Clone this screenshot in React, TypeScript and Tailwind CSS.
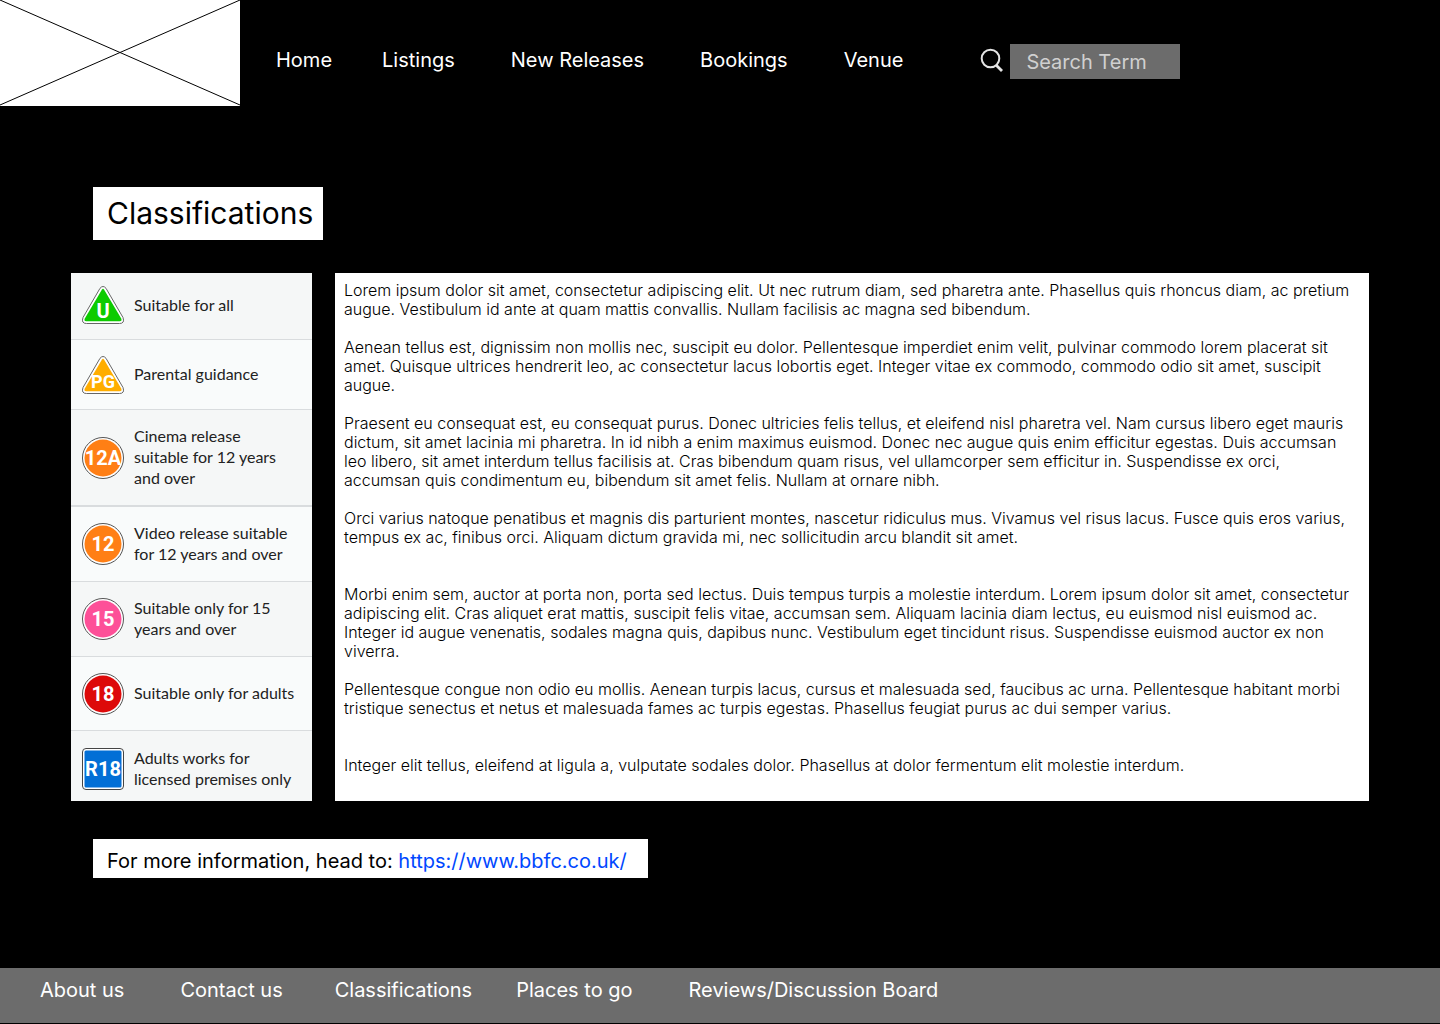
import React from "react";

type Shape = "triangle" | "circle" | "square";

interface Rating {
  code: string;
  label: string;
  shape: Shape;
  color: string;
  row: string;
}

const ratings: Rating[] = [
  { code: "U", label: "Suitable for all", shape: "triangle", color: "#0dcb00", row: "min-h-[67px] pb-0.5 border-b bg-[#f5f7f7]" },
  { code: "PG", label: "Parental guidance", shape: "triangle", color: "#ffad00", row: "min-h-[70px] border-b bg-[#f9fbfb]" },
  { code: "12A", label: "Cinema release suitable for 12 years and over", shape: "circle", color: "#ff7f15", row: "min-h-[97px] border-b-2 bg-[#f5f7f7]" },
  { code: "12", label: "Video release suitable for 12 years and over", shape: "circle", color: "#ff7f15", row: "min-h-[75px] border-b bg-[#f9fbfb]" },
  { code: "15", label: "Suitable only for 15 years and over", shape: "circle", color: "#fd5098", row: "min-h-[75px] border-b bg-[#f5f7f7]" },
  { code: "18", label: "Suitable only for adults", shape: "circle", color: "#dd0a0a", row: "min-h-[74px] border-b bg-[#f9fbfb]" },
  { code: "R18", label: "Adults works for licensed premises only", shape: "square", color: "#026fd6", row: "min-h-[70px] pt-1.5 bg-[#f5f7f7]" },
];

const paragraphs = [
  { text: "Lorem ipsum dolor sit amet, consectetur adipiscing elit. Ut nec rutrum diam, sed pharetra ante. Phasellus quis rhoncus diam, ac pretium augue. Vestibulum id ante at quam mattis convallis. Nullam facilisis ac magna sed bibendum.", gap: "mb-[19px]" },
  { text: "Aenean tellus est, dignissim non mollis nec, suscipit eu dolor. Pellentesque imperdiet enim velit, pulvinar commodo lorem placerat sit amet. Quisque ultrices hendrerit leo, ac consectetur lacus lobortis eget. Integer vitae ex commodo, commodo odio sit amet, suscipit augue.", gap: "mb-[19px]" },
  { text: "Praesent eu consequat est, eu consequat purus. Donec ultricies felis tellus, et eleifend nisl pharetra vel. Nam cursus libero eget mauris dictum, sit amet lacinia mi pharetra. In id nibh a enim maximus euismod. Donec nec augue quis enim efficitur egestas. Duis accumsan leo libero, sit amet interdum tellus facilisis at. Cras bibendum quam risus, vel ullamcorper sem efficitur in. Suspendisse ex orci, accumsan quis condimentum eu, bibendum sit amet felis. Nullam at ornare nibh.", gap: "mb-[19px]" },
  { text: "Orci varius natoque penatibus et magnis dis parturient montes, nascetur ridiculus mus. Vivamus vel risus lacus. Fusce quis eros varius, tempus ex ac, finibus orci. Aliquam dictum gravida mi, nec sollicitudin arcu blandit sit amet.", gap: "mb-[38px]" },
  { text: "Morbi enim sem, auctor at porta non, porta sed lectus. Duis tempus turpis a molestie interdum. Lorem ipsum dolor sit amet, consectetur adipiscing elit. Cras aliquet erat mattis, suscipit felis vitae, accumsan sem. Aliquam lacinia diam lectus, eu euismod nisl euismod ac. Integer id augue venenatis, sodales magna quis, dapibus nunc. Vestibulum eget tincidunt risus. Suspendisse euismod auctor ex non viverra.", gap: "mb-[19px]" },
  { text: "Pellentesque congue non odio eu mollis. Aenean turpis lacus, cursus et malesuada sed, faucibus ac urna. Pellentesque habitant morbi tristique senectus et netus et malesuada fames ac turpis egestas. Phasellus feugiat purus ac dui semper varius.", gap: "mb-[38px]" },
  { text: "Integer elit tellus, eleifend at ligula a, vulputate sodales dolor. Phasellus at dolor fermentum elit molestie interdum.", gap: "" },
];

function Badge({ code, shape, color }: Pick<Rating, "code" | "shape" | "color">) {
  const height = shape === "triangle" ? 38 : 42;
  const fontSize = code === "PG" ? 18 : 20;
  const baseline = shape === "triangle" ? 32 : 28;
  return (
    <svg width="42" height={height} viewBox={`0 0 42 ${height}`} aria-hidden="true" className="shrink-0">
      {shape === "triangle" && (
        <>
          <path d="M18 2.3Q21-1.3 24 2.3L41 31.5Q43 37.5 37.5 37.5H4.5Q-1 37.5 1 31.5Z" fill="#fff" stroke="#666" strokeWidth="1" />
          <path d="M20 3.5Q21 2 22 3.5L39.5 33Q40 35.3 38 35.3H4Q2 35.3 2.5 33Z" fill={color} />
        </>
      )}
      {shape === "circle" && (
        <>
          <circle cx="21" cy="21" r="20.5" fill="#fff" stroke="#555" />
          <circle cx="21" cy="21" r="18.5" fill={color} />
        </>
      )}
      {shape === "square" && (
        <>
          <rect x=".5" y=".5" width="41" height="41" rx="3.5" fill="#fff" stroke="#444" />
          <rect x="2.5" y="2.5" width="37" height="37" rx="1.5" fill={color} />
        </>
      )}
      <text x="21" y={baseline} textAnchor="middle" fontSize={fontSize} fontWeight="700" fill="#fff" className="font-['Roboto',sans-serif]">
        {code}
      </text>
    </svg>
  );
}

export default function App() {
  return (
    <div className="flex min-h-screen flex-col bg-black font-['Inter',sans-serif]">
      <header className="flex items-start">
        <a href="#" aria-label="Logo" className="block shrink-0 bg-white">
          <svg width="240" height="106" viewBox="0 0 240 106" className="block" fill="none" stroke="#000">
            <path d="M0 0L240 105M0 105L240 0" />
          </svg>
        </a>
        <nav aria-label="Main" className="ml-9 flex gap-14 pt-12 text-xl leading-6 whitespace-nowrap text-white">
          <a href="#" className="-mr-1.5">Home</a>
          <a href="#">Listings</a>
          <a href="#">New Releases</a>
          <a href="#">Bookings</a>
          <a href="#">Venue</a>
        </nav>
        <form role="search" className="ml-[77px] flex pt-11" onSubmit={(e) => e.preventDefault()}>
          <button type="submit" aria-label="Search" className="mr-1.5 flex h-8 w-6 items-center justify-center">
            <svg width="24" height="26" viewBox="0 0 24 26" fill="none" stroke="#e4e4e4">
              <circle cx="10.5" cy="11.5" r="8.8" strokeWidth="2" />
              <path d="M16 18L22 24" strokeWidth="2.8" />
            </svg>
          </button>
          <input type="text" aria-label="Search Term" placeholder="Search Term" className="h-[35px] w-[170px] bg-[#6c6c6c] px-4 text-xl leading-6 text-white outline-none placeholder:text-[#d0d0d0]" />
        </form>
      </header>

      <main className="px-[71px] pt-[81px]">
        <h1 className="ml-[22px] h-[53px] w-[230px] bg-white pt-2 pl-3.5 text-3xl leading-9 whitespace-nowrap">Classifications</h1>

        <div className="mt-[33px] flex items-stretch gap-[23px]">
          <ul className="w-[241px] shrink-0 bg-[#f5f7f7] font-['Lato',sans-serif] text-base leading-[21px] text-[#222]">
            {ratings.map((r) => (
              <li key={r.code} className={`flex items-center gap-2.5 border-[#d9dcde] pr-4 pl-[11px] ${r.row}`}>
                <Badge code={r.code} shape={r.shape} color={r.color} />
                <span className="pb-0.5">{r.label}</span>
              </li>
            ))}
          </ul>

          <article className="flex-1 bg-white px-[9px] pt-2 pb-[26px] text-base leading-[19px] font-light text-black">
            {paragraphs.map((p) => (
              <p key={p.text} className={p.gap}>{p.text}</p>
            ))}
          </article>
        </div>

        <p className="mt-[38px] mb-8 ml-[22px] h-[39px] w-[555px] bg-white pt-2.5 pl-3.5 text-xl leading-6 whitespace-nowrap text-black">
          For more information, head to: <a href="https://www.bbfc.co.uk/" className="text-[#0047ff]">https://www.bbfc.co.uk/</a>
        </p>
      </main>

      <footer className="mt-auto mb-px min-h-[55px] bg-[#6c6c6c] pt-2.5 pl-10">
        <nav aria-label="Footer" className="flex gap-14 text-xl leading-6 whitespace-nowrap text-white">
          <a href="#">About us</a>
          <a href="#" className="-mr-1">Contact us</a>
          <a href="#" className="-mr-3">Classifications</a>
          <a href="#">Places to go</a>
          <a href="#">Reviews/Discussion Board</a>
        </nav>
      </footer>
    </div>
  );
}
